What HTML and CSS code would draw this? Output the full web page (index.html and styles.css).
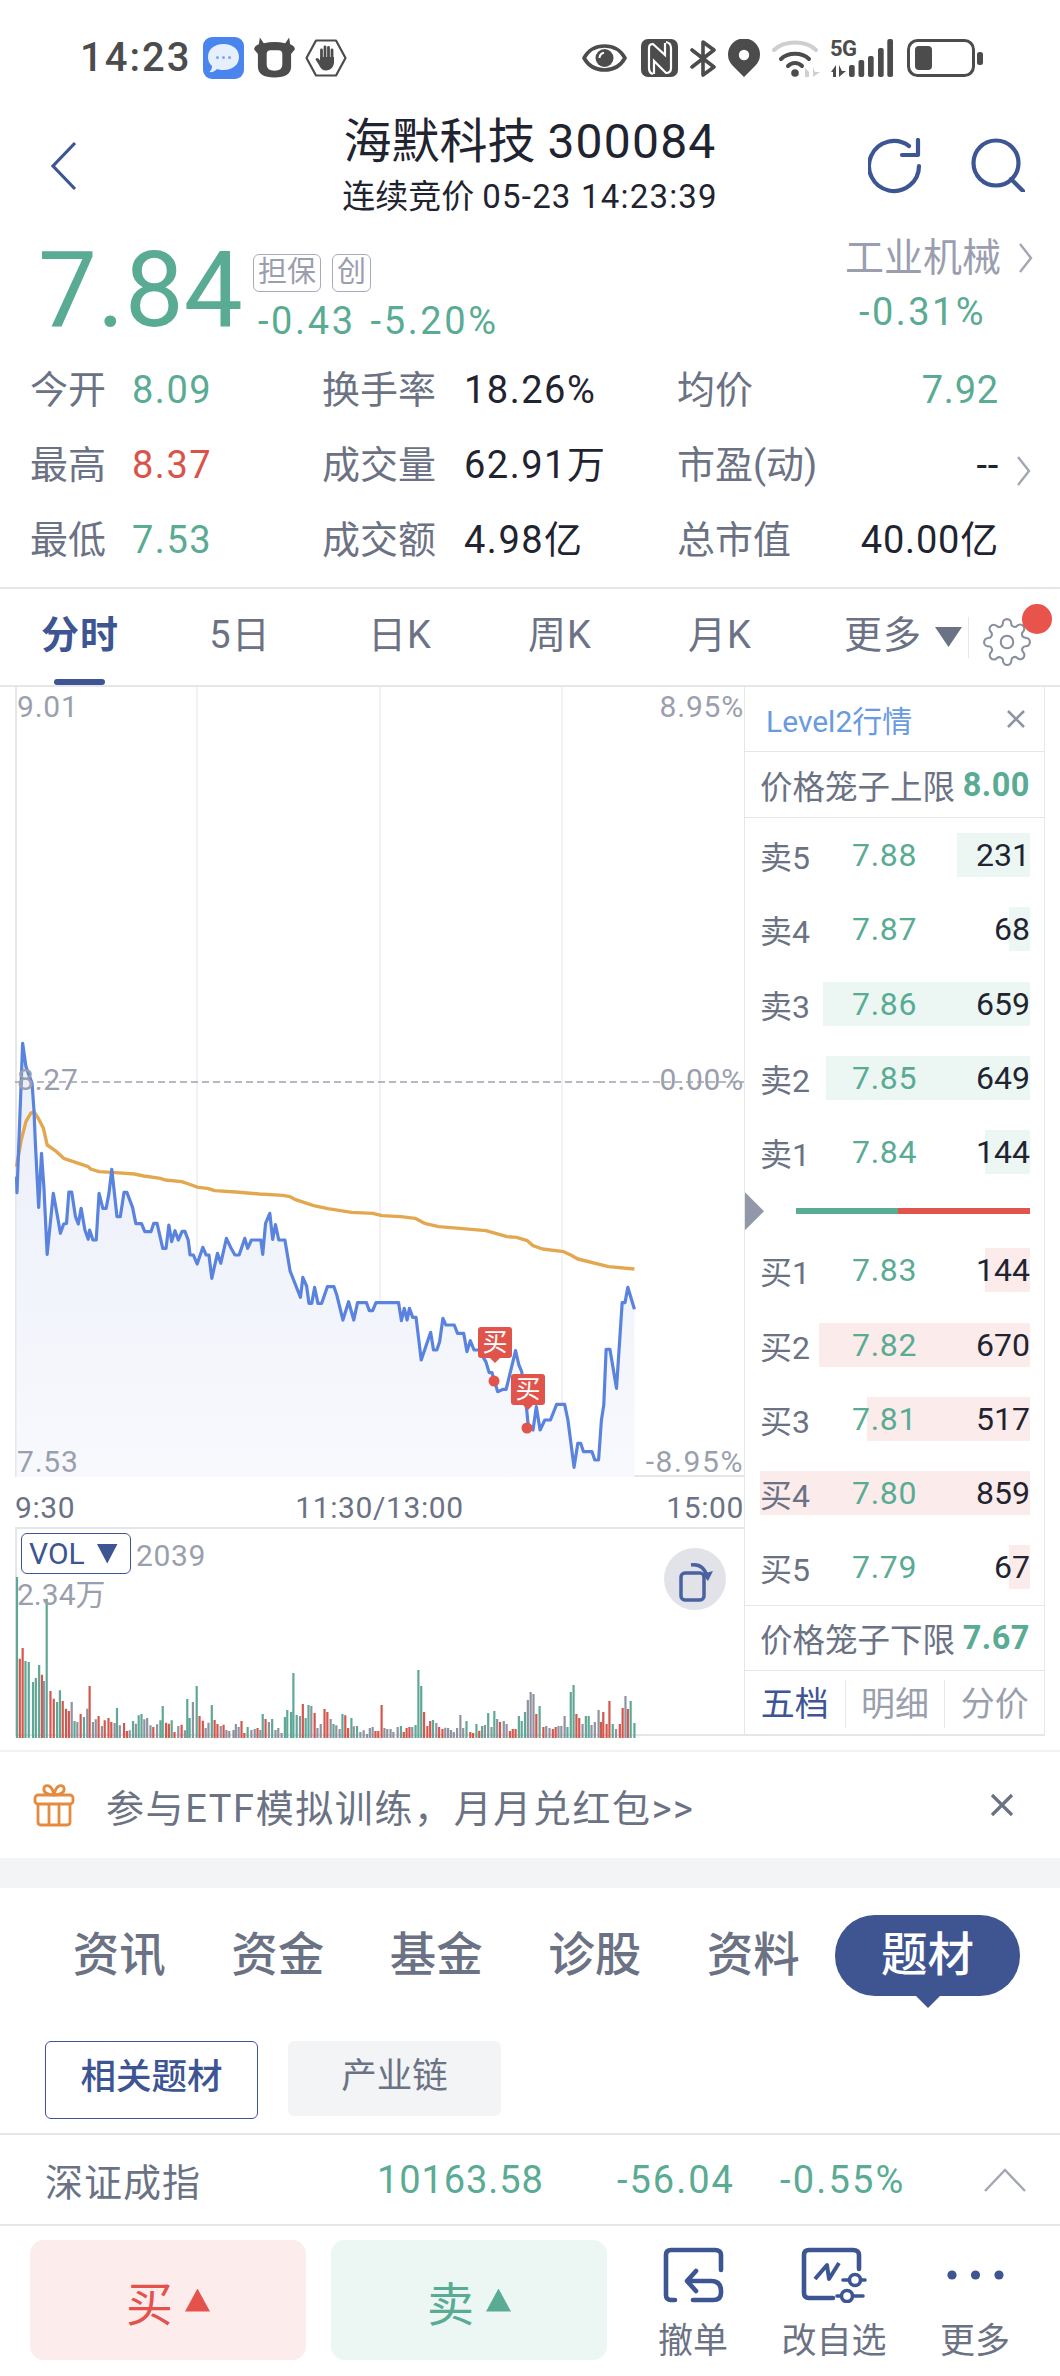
FILE: index.html
```html
<!DOCTYPE html>
<html lang="zh-CN">
<head>
<meta charset="utf-8">
<title>海默科技 300084</title>
<link rel="stylesheet" href="styles.css">
</head>
<body>
<div class="app">

  <div class="statusbar">
    <div class="status-left">
      <span class="clock">14:23</span>
      <svg class="s-msg" viewBox="0 0 41 42"><rect width="41" height="42" rx="9" fill="#4a85ef"/><path d="M20.5 7C30 7 36 12.500 36 20S30 33 20.500 33C18 33 16 32.700 14 32C12 34.500 9 35.500 6.500 35C8 33.500 9 31.500 9 29C6.500 27 5 24 5 20C5 12.500 11 7 20.500 7Z" fill="#e6f0fd"/><circle cx="14.500" cy="20.500" r="1.500" fill="#7ea6ea"/><circle cx="20.500" cy="20.500" r="1.500" fill="#7ea6ea"/><circle cx="26.500" cy="20.500" r="1.500" fill="#7ea6ea"/></svg>
      <svg class="s-cow" viewBox="0 0 42 42"><path fill-rule="evenodd" d="M6 0L10 6Q21 3 32 6L36 0L37 7Q41 8 42 12L38 17V30Q38 41 21 41Q4 41 4 30V17L0 12Q1 8 5 7ZM17 13Q13 13 13 17V28Q13 34 21 34Q29 34 29 28V17Q29 13 25 13Z" fill="#4c4c4c"/></svg>
      <svg class="s-hand" viewBox="0 0 42 38"><path d="M1.500 19L11 1.500H31L40.500 19L31 36.500H11Z" fill="none" stroke="#4c4c4c" stroke-width="2.200" stroke-linejoin="round"/><path d="M16.500 20V11M20 20V8M23.500 20V8.500M27 21V11" stroke="#4c4c4c" stroke-width="2.800" stroke-linecap="round" fill="none"/><path d="M15 18H29V24Q28 31 21.500 31.500Q16 31.500 14 26L10.500 20.500Q11 18 13.500 19.500L15 21.500Z" fill="#4c4c4c"/></svg>
    </div>
    <div class="status-right">
      <svg class="s-eye" viewBox="0 0 45 30"><path d="M2 15C11 -1 34 -1 43 15C34 31 11 31 2 15Z" fill="none" stroke="#4c4c4c" stroke-width="3.600" stroke-linejoin="round"/><circle cx="22.500" cy="15" r="9" fill="#4c4c4c"/><path d="M17.500 15A5.500 5.500 0 0 1 22 9.800" fill="none" stroke="#fff" stroke-width="2"/></svg>
      <svg class="s-nfc" viewBox="0 0 37 38"><rect width="37" height="38" rx="7" fill="#4c4c4c"/><path d="M12 35Q8 34 8 29V9Q8 5 12 5L24 16V4M25 3Q30 4 30 9V29Q30 34 25 34L13 22V35" fill="none" stroke="#fff" stroke-width="2.200"/></svg>
      <svg class="s-bt" viewBox="0 0 26 37"><path d="M2 10L24 27L13 35V2L24 10L2 27" fill="none" stroke="#4c4c4c" stroke-width="3.600" stroke-linejoin="round" stroke-linecap="round"/></svg>
      <svg class="s-pin" viewBox="0 0 32 38"><path d="M16 38L4.500 26.500A16 16 0 1 1 27.500 26.500Z" fill="#4c4c4c"/><circle cx="16" cy="16" r="5.200" fill="#fff"/></svg>
      <svg class="s-wifi" viewBox="0 0 48 39"><path d="M2 11C12 1 34 1 44 11" fill="none" stroke="#cfcfcf" stroke-width="4" stroke-linecap="round"/><path d="M9 20C16 13 30 13 37 20M16 27C20 23 26 23 30 27" fill="none" stroke="#4c4c4c" stroke-width="4" stroke-linecap="round"/><circle cx="23" cy="34" r="3.800" fill="#4c4c4c"/><path d="M33 38V29L37 33V38ZM41 28V38L48 33H43Z" fill="#cfcfcf"/></svg>
      <div class="s-net">
        <span class="s-5g">5G</span>
        <svg class="s-bars" viewBox="0 0 63 39"><path d="M1 33L6 26V38H3V33ZM9 26V38L16 32H12Z" fill="#4c4c4c"/><rect x="19" y="26" width="5.700" height="12" rx="2" fill="#4c4c4c"/><rect x="28.500" y="21" width="5.700" height="17" rx="2" fill="#4c4c4c"/><rect x="38" y="17" width="5.700" height="21" rx="2" fill="#4c4c4c"/><rect x="48" y="9" width="5.700" height="29" rx="2" fill="#4c4c4c"/><rect x="57.300" y="0" width="5.700" height="38" rx="2" fill="#4c4c4c"/></svg>
      </div>
      <svg class="s-batt" viewBox="0 0 76 38"><rect x="1.500" y="1.500" width="65" height="35" rx="9" fill="none" stroke="#4c4c4c" stroke-width="3"/><rect x="8" y="7" width="17" height="24" rx="4" fill="#4c4c4c"/><rect x="70" y="13" width="6" height="13" rx="2.500" fill="#4c4c4c"/></svg>
    </div>
  </div>

  <header class="header">
    <div class="header-left">
      <svg class="ic-back" viewBox="0 0 27 50"><path d="M25 2L3 25L25 48" fill="none" stroke="#3d5593" stroke-width="3.200"/></svg>
    </div>
    <div class="titles">
      <div class="title">海默科技 <span class="num">300084</span></div>
      <div class="subtitle">连续竞价 <span class="num">05-23 14:23:39</span></div>
    </div>
    <div class="header-right">
      <svg class="ic-refresh" viewBox="0 0 54 56"><path d="M41 8A25 25 0 1 0 51 28" fill="none" stroke="#3d5593" stroke-width="4.200" stroke-linecap="round"/><path d="M34 17H50V2" fill="none" stroke="#3d5593" stroke-width="4.200" stroke-linejoin="round" stroke-linecap="round"/></svg>
      <svg class="ic-search" viewBox="0 0 55 54"><circle cx="26" cy="25" r="22.500" fill="none" stroke="#3d5593" stroke-width="4.200"/><path d="M41 41L53 53" stroke="#3d5593" stroke-width="4.200" stroke-linecap="round"/></svg>
    </div>
  </header>

  <section class="quote">
    <div class="price">7.84</div>
    <div class="quote-side">
      <div class="tags"><span class="tag">担保</span><span class="tag">创</span></div>
      <div class="change"><span>-0.43</span><span>-5.20%</span></div>
    </div>
    <div class="sector">
      <div class="sector-name">工业机械<svg class="chev-r sector-chev" viewBox="0 0 15 30"><path d="M2 1L13 15L2 29" fill="none" stroke="#a3a7b3" stroke-width="2.400"/></svg></div>
      <div class="sector-change">-0.31%</div>
    </div>
  </section>

  <section class="stats">
    <span class="k">今开</span><span class="v down">8.09</span>
    <span class="k">换手率</span><span class="v">18.26%</span>
    <span class="k">均价</span><span class="v down end">7.92</span><span></span>

    <span class="k">最高</span><span class="v up">8.37</span>
    <span class="k">成交量</span><span class="v">62.91万</span>
    <span class="k">市盈(动)</span><span class="v end">--</span><span class="more"><svg class="chev-r" viewBox="0 0 15 30"><path d="M2 1L13 15L2 29" fill="none" stroke="#a3a7b3" stroke-width="2.400"/></svg></span>

    <span class="k">最低</span><span class="v down">7.53</span>
    <span class="k">成交额</span><span class="v">4.98亿</span>
    <span class="k">总市值</span><span class="v end">40.00亿</span><span></span>
  </section>

  <nav class="periods">
    <span class="period active">分时</span>
    <span class="period">5日</span>
    <span class="period">日K</span>
    <span class="period">周K</span>
    <span class="period">月K</span>
    <span class="period period-more">更多</span>
    <span class="gear-cell">
      <svg class="gear" viewBox="0 0 24 24"><path d="M12 15a3 3 0 1 0 0-6 3 3 0 0 0 0 6z" fill="none" stroke="#8a8f9e" stroke-width="1"/><path d="M19.400 15a1.650 1.650 0 0 0 .33 1.820l.06.06a2 2 0 0 1 0 2.830 2 2 0 0 1-2.830 0l-.06-.06a1.650 1.650 0 0 0-1.820-.33 1.650 1.650 0 0 0-1 1.510V21a2 2 0 0 1-2 2 2 2 0 0 1-2-2v-.09A1.650 1.650 0 0 0 9 19.400a1.650 1.650 0 0 0-1.820.33l-.06.06a2 2 0 0 1-2.830 0 2 2 0 0 1 0-2.830l.06-.06a1.650 1.650 0 0 0 .33-1.820 1.650 1.650 0 0 0-1.510-1H3a2 2 0 0 1-2-2 2 2 0 0 1 2-2h.09A1.650 1.650 0 0 0 4.600 9a1.650 1.650 0 0 0-.33-1.820l-.06-.06a2 2 0 0 1 0-2.830 2 2 0 0 1 2.830 0l.06.06a1.650 1.650 0 0 0 1.820.33H9a1.650 1.650 0 0 0 1-1.510V3a2 2 0 0 1 2-2 2 2 0 0 1 2 2v.09a1.650 1.650 0 0 0 1 1.510 1.650 1.650 0 0 0 1.820-.33l.06-.06a2 2 0 0 1 2.830 0 2 2 0 0 1 0 2.830l-.06.06a1.650 1.650 0 0 0-.33 1.820V9a1.650 1.650 0 0 0 1.510 1H21a2 2 0 0 1 2 2 2 2 0 0 1-2 2h-.09a1.650 1.650 0 0 0-1.510 1z" fill="none" stroke="#8a8f9e" stroke-width="1"/></svg>
      <span class="gear-dot"></span>
    </span>
  </nav>

  <section class="market">
    <div class="chart-col">
      <div class="price-chart">
        <svg class="plot" viewBox="15 687 730 790">
          <defs>
            <linearGradient id="area" x1="0" y1="0" x2="0" y2="1">
              <stop offset="0" stop-color="#eaeef9"/>
              <stop offset="1" stop-color="#f8f9fd"/>
            </linearGradient>
          </defs>
          <path d="M197 687V1477M380 687V1477M562 687V1477" stroke="#edeef1" stroke-width="1.500"/>
          <path d="M15 1082H744" stroke="#9ea3b0" stroke-width="1.500" stroke-dasharray="7 4"/>
          <g transform="translate(0 1000) scale(.4717 .33333)">
            <polygon fill="url(#area)" points="35,1432 35,530 36,578 48,130 55,200 68,250 72,330 75,430 82,622 88,460 93,560 100,763 113,580 122,650 128,700 135,672 141,670 146,576 152,576 160,650 166,672 172,625 180,690 187,718 190,690 197,720 204,720 210,580 218,625 225,625 231,580 237,508 248,650 255,650 263,577 269,577 281,622 288,671 300,671 307,695 320,695 326,670 333,670 345,745 352,745 358,675 364,725 371,692 378,720 386,694 392,694 399,720 403,765 410,765 418,792 430,742 437,765 443,765 449,835 461,760 468,790 480,715 490,745 498,765 507,765 519,715 525,745 533,720 553,720 557,763 563,670 572,640 578,718 584,674 591,720 604,720 615,813 637,892 642,832 650,858 655,910 661,910 667,862 674,910 682,910 694,860 708,860 714,885 727,960 739,905 750,960 758,908 777,908 783,932 790,932 797,908 845,908 851,962 857,925 863,960 868,925 875,952 882,952 893,1080 913,997 919,1050 926,1050 932,1025 939,955 945,975 963,975 970,1000 983,1000 990,1055 997,1022 1005,1050 1015,1050 1030,1085 1037,1118 1043,1118 1055,1175 1067,1168 1073,1168 1093,1052 1100,1095 1106,1115 1117,1235 1120,1280 1130,1290 1137,1220 1145,1290 1155,1260 1167,1260 1180,1213 1197,1213 1204,1260 1217,1402 1225,1330 1231,1330 1237,1355 1255,1355 1261,1380 1269,1380 1275,1260 1280,1215 1285,1048 1293,1048 1307,1165 1319,908 1325,908 1331,862 1345,928 1345,1432"/>
            <polyline class="line-avg" points="35,500 45,420 55,365 65,340 72,335 80,352 92,385 100,435 120,455 135,475 187,500 192,507 210,515 245,518 285,522 305,528 340,535 350,540 385,545 400,552 420,562 440,565 455,572 500,576 550,582 600,586 615,590 625,598 665,617 695,626 745,637 790,640 810,647 850,650 880,655 900,670 930,680 975,685 1030,692 1075,710 1095,712 1118,722 1130,737 1150,747 1195,755 1210,765 1225,777 1290,800 1345,807"/>
            <polyline class="line-price" points="35,530 36,578 48,130 55,200 68,250 72,330 75,430 82,622 88,460 93,560 100,763 113,580 122,650 128,700 135,672 141,670 146,576 152,576 160,650 166,672 172,625 180,690 187,718 190,690 197,720 204,720 210,580 218,625 225,625 231,580 237,508 248,650 255,650 263,577 269,577 281,622 288,671 300,671 307,695 320,695 326,670 333,670 345,745 352,745 358,675 364,725 371,692 378,720 386,694 392,694 399,720 403,765 410,765 418,792 430,742 437,765 443,765 449,835 461,760 468,790 480,715 490,745 498,765 507,765 519,715 525,745 533,720 553,720 557,763 563,670 572,640 578,718 584,674 591,720 604,720 615,813 637,892 642,832 650,858 655,910 661,910 667,862 674,910 682,910 694,860 708,860 714,885 727,960 739,905 750,960 758,908 777,908 783,932 790,932 797,908 845,908 851,962 857,925 863,960 868,925 875,952 882,952 893,1080 913,997 919,1050 926,1050 932,1025 939,955 945,975 963,975 970,1000 983,1000 990,1055 997,1022 1005,1050 1015,1050 1030,1085 1037,1118 1043,1118 1055,1175 1067,1168 1073,1168 1093,1052 1100,1095 1106,1115 1117,1235 1120,1280 1130,1290 1137,1220 1145,1290 1155,1260 1167,1260 1180,1213 1197,1213 1204,1260 1217,1402 1225,1330 1231,1330 1237,1355 1255,1355 1261,1380 1269,1380 1275,1260 1280,1215 1285,1048 1293,1048 1307,1165 1319,908 1325,908 1331,862 1345,928"/>
          </g>
          <circle cx="494" cy="1381" r="5.500" fill="#e0544c"/>
          <circle cx="527" cy="1428" r="5.500" fill="#e0544c"/>
        </svg>
        <span class="axis-label lt">9.01</span>
        <span class="axis-label rt">8.95%</span>
        <span class="axis-label lm">8.27</span>
        <span class="axis-label rm">0.00%</span>
        <span class="axis-label lb">7.53</span>
        <span class="axis-label rb">-8.95%</span>
        <span class="trade-tag tag-a">买</span>
        <span class="trade-tag tag-b">买</span>
      </div>
      <div class="time-axis"><span>9:30</span><span>11:30/13:00</span><span class="time-end">15:00</span></div>
      <div class="vol-panel">
        <svg class="vol-bars" viewBox="0 1500 730 236" preserveAspectRatio="none">
          <g transform="translate(-15 1500) scale(.4717 .33333)">
            <path class="bar-g" d="M36 708V225M54 708V477M61 708V480M70 708V540M76 708V528M83 708V489M99 708V290M121 708V600M127 708V565M158 708V657M178 708V645M248 708V618M282 708V657M294 708V640M300 708V636M340 708V655M345 708V612M364 708V655M397 708V591M402 708V648M417 708V552M449 708V609M525 708V675M557 708V636M577 708V651M604 708V645M609 708V624M617 708V630M622 708V513M629 708V639M648 708V648M654 708V609M707 708V666M726 708V636M745 708V648M757 708V672M850 708V672M881 708V669M887 708V504M893 708V552M918 708V654M989 708V657M1010 708V666M1022 708V672M1035 708V633M1048 708V627M1100 708V642M1106 708V657M1113 708V630M1144 708V612M1203 708V675M1210 708V570M1216 708V549M1242 708V642M1248 708V642M1299 708V666M1337 708V597M1345 708V663"/>
            <path class="bar-r" d="M42 708V470M48 708V438M89 708V518M107 708V567M114 708V590M133 708V597M140 708V620M146 708V627M171 708V636M190 708V552M209 708V642M222 708V655M230 708V648M236 708V660M263 708V663M269 708V687M325 708V675M352 708V662M358 708V665M370 708V690M385 708V668M423 708V642M430 708V656M455 708V654M461 708V666M474 708V668M512 708V657M518 708V693M546 708V678M563 708V651M642 708V606M667 708V633M688 708V621M694 708V630M732 708V640M738 708V678M796 708V687M802 708V687M809 708V609M856 708V690M862 708V678M868 708V675M899 708V630M906 708V672M912 708V657M931 708V675M938 708V681M997 708V690M1003 708V693M1016 708V686M1060 708V660M1081 708V687M1087 708V681M1093 708V681M1137 708V636M1152 708V675M1172 708V681M1178 708V675M1222 708V636M1228 708V648M1274 708V660M1279 708V630M1286 708V666M1292 708V597M1314 708V666M1320 708V618M1331 708V621"/>
            <path class="bar-s" d="M93 708V537M152 708V600M164 708V660M185 708V620M197 708V660M203 708V652M216 708V672M243 708V663M254 708V670M275 708V685M288 708V665M306 708V652M312 708V648M319 708V670M333 708V667M378 708V672M392 708V685M409 708V600M436 708V678M442 708V662M468 708V672M480 708V684M486 708V687M495 708V684M500 708V666M506 708V675M533 708V684M540 708V681M552 708V684M570 708V660M584 708V684M590 708V678M597 708V693M636 708V642M660 708V612M673 708V678M680 708V666M701 708V651M713 708V670M720 708V681M750 708V673M764 708V690M771 708V685M778 708V696M784 708V678M790 708V675M815 708V678M821 708V681M828 708V681M834 708V690M843 708V675M874 708V675M925 708V663M944 708V677M950 708V678M956 708V684M962 708V690M969 708V678M976 708V639M982 708V678M1028 708V669M1042 708V675M1054 708V651M1068 708V657M1074 708V666M1119 708V594M1125 708V570M1131 708V576M1158 708V672M1165 708V678M1184 708V672M1190 708V672M1197 708V642M1235 708V666M1254 708V669M1261 708V660M1269 708V624M1306 708V681M1326 708V582"/>
          </g>
        </svg>
        <div class="vol-head">
          <span class="vol-select">VOL<i class="vol-caret"></i></span>
          <span class="vol-value">2039</span>
        </div>
        <span class="vol-max">2.34万</span>
        <span class="rotate-btn">
          <svg viewBox="0 0 40 42"><rect x="6" y="13" width="23" height="27" rx="4" fill="none" stroke="#4a62a0" stroke-width="3.500"/><path d="M16 5Q28 3 32 16" fill="none" stroke="#4a62a0" stroke-width="3.500"/><path d="M27 14L33 21L38 11Z" fill="#4a62a0"/></svg>
        </span>
      </div>
    </div>

    <aside class="depth">
      <div class="depth-head"><span>Level2行情</span><svg class="x-small" viewBox="0 0 18 18"><path d="M1 1L17 17M17 1L1 17" stroke="#8e93a1" stroke-width="2.600"/></svg></div>
      <div class="cage"><span>价格笼子上限</span><b>8.00</b></div>
      <div class="book">
        <div class="level"><i class="fill ask" style="width:73px"></i><span class="lv">卖5</span><span class="lp">7.88</span><span class="lq">231</span></div>
        <div class="level"><i class="fill ask" style="width:21px"></i><span class="lv">卖4</span><span class="lp">7.87</span><span class="lq">68</span></div>
        <div class="level"><i class="fill ask" style="width:207px"></i><span class="lv">卖3</span><span class="lp">7.86</span><span class="lq">659</span></div>
        <div class="level"><i class="fill ask" style="width:204px"></i><span class="lv">卖2</span><span class="lp">7.85</span><span class="lq">649</span></div>
        <div class="level"><i class="fill ask" style="width:45px"></i><span class="lv">卖1</span><span class="lp">7.84</span><span class="lq">144</span></div>
        <div class="balance"><i class="balance-mark"></i><span class="balance-bar"><i class="side-ask"></i><i class="side-bid"></i></span></div>
        <div class="level"><i class="fill bid" style="width:45px"></i><span class="lv">买1</span><span class="lp">7.83</span><span class="lq">144</span></div>
        <div class="level"><i class="fill bid" style="width:211px"></i><span class="lv">买2</span><span class="lp">7.82</span><span class="lq">670</span></div>
        <div class="level"><i class="fill bid" style="width:163px"></i><span class="lv">买3</span><span class="lp">7.81</span><span class="lq">517</span></div>
        <div class="level"><i class="fill bid" style="width:270px"></i><span class="lv">买4</span><span class="lp">7.80</span><span class="lq">859</span></div>
        <div class="level"><i class="fill bid" style="width:21px"></i><span class="lv">买5</span><span class="lp">7.79</span><span class="lq">67</span></div>
      </div>
      <div class="cage cage-low"><span>价格笼子下限</span><b>7.67</b></div>
      <div class="depth-tabs"><span class="active">五档</span><span>明细</span><span>分价</span></div>
    </aside>
  </section>

  <div class="promo">
    <svg class="gift" viewBox="0 0 42 44"><g fill="none" stroke="#e58b3f" stroke-width="2.800" stroke-linejoin="round"><path d="M21 12C14 12 10 9 11 5C12 1 19 1 21 12C23 1 30 1 31 5C32 9 28 12 21 12Z"/><rect x="2" y="12" width="38" height="9" rx="3"/><path d="M5 21V39Q5 42 8 42H34Q37 42 37 39V21"/><path d="M16 21V42M26 21V42"/></g></svg>
    <span class="promo-text">参与ETF模拟训练，月月兑红包&gt;&gt;</span>
    <svg class="promo-x" viewBox="0 0 24 24"><path d="M2 2L22 22M22 2L2 22" stroke="#6b7284" stroke-width="3.200"/></svg>
  </div>
  <div class="band"></div>

  <nav class="info-tabs">
    <span class="info-tab">资讯</span>
    <span class="info-tab">资金</span>
    <span class="info-tab">基金</span>
    <span class="info-tab">诊股</span>
    <span class="info-tab">资料</span>
    <span class="info-tab current">题材</span>
  </nav>

  <div class="sub-tabs">
    <span class="sub-tab on">相关题材</span>
    <span class="sub-tab">产业链</span>
  </div>

  <div class="index-row">
    <span class="index-name">深证成指</span>
    <span class="index-last">10163.58</span>
    <span class="index-chg">-56.04</span>
    <span class="index-pct">-0.55%</span>
    <svg class="chev-up" viewBox="0 0 44 24"><path d="M2 23L22 2L42 23" fill="none" stroke="#a3a7b3" stroke-width="2.400"/></svg>
  </div>

  <footer class="actions">
    <button class="trade buy">买<i class="arrow"></i></button>
    <button class="trade sell">卖<i class="arrow"></i></button>
    <div class="act act-undo">
      <svg class="act-ic" viewBox="0 0 61 56"><path d="M58 23V8Q58 3 52 3H8Q3 3 3 8V48Q3 53 8 53H12M33 24L24 34L33 44M24 34H48Q58 34 58 44V46Q58 53 50 53H30" fill="none" stroke="#3d5593" stroke-width="4.600" stroke-linejoin="round" stroke-linecap="round"/></svg>
      <span>撤单</span>
    </div>
    <div class="act act-fav">
      <svg class="act-ic" viewBox="0 0 66 56"><path d="M58 22V8Q58 3 52 3H8Q3 3 3 8V46Q3 51 8 51H32" fill="none" stroke="#3d5593" stroke-width="4.600" stroke-linecap="round"/><path d="M14 32L26 18L28 32L38 16" fill="none" stroke="#3d5593" stroke-width="4" stroke-linejoin="round"/><path d="M42 33H64M36 49H62" stroke="#3d5593" stroke-width="3.600" stroke-linecap="round"/><circle cx="54" cy="33" r="5.500" fill="#fff" stroke="#3d5593" stroke-width="3.600"/><circle cx="46" cy="49" r="5.500" fill="#fff" stroke="#3d5593" stroke-width="3.600"/></svg>
      <span>改自选</span>
    </div>
    <div class="act act-more">
      <svg class="act-ic dots" viewBox="0 0 57 10"><circle cx="5" cy="5" r="4.600" fill="#3d5593"/><circle cx="28.500" cy="5" r="4.600" fill="#3d5593"/><circle cx="52" cy="5" r="4.600" fill="#3d5593"/></svg>
      <span>更多</span>
    </div>
  </footer>

</div>
</body>
</html>
```

FILE: styles.css
```css
* { box-sizing: border-box; margin: 0; padding: 0; }

html, body { background: #fff; }

body {
  font-family: Roboto, "Noto Sans CJK SC", sans-serif;
  color: #1f2430;
}

.app { width: 1060px; height: 2376px; overflow: hidden; }

svg { display: block; flex: none; }
i { font-style: normal; }

/* system status bar */
.statusbar {
  height: 110px;
  padding: 37px 77px 0 80px;
  display: flex;
  justify-content: space-between;
  align-items: flex-start;
}
.status-left { display: flex; align-items: center; gap: 10px; }
.clock {
  width: 113px;
  font-size: 40px;
  line-height: 42px;
  font-weight: 500;
  letter-spacing: 2px;
  color: #4c4c4c;
}
.s-msg, .s-cow { width: 41px; height: 42px; }
.s-hand { width: 42px; height: 38px; }
.status-right { display: flex; align-items: center; gap: 12px; height: 42px; }
.s-eye { width: 45px; height: 30px; margin-right: 2px; }
.s-nfc { width: 37px; height: 38px; }
.s-bt { width: 26px; height: 37px; }
.s-pin { width: 32px; height: 38px; }
.s-wifi { width: 48px; height: 39px; }
.s-net { position: relative; width: 63px; height: 39px; margin-left: -2px; }
.s-bars { width: 63px; height: 39px; }
.s-5g {
  position: absolute;
  left: 0;
  top: 0;
  font-size: 22px;
  line-height: 20px;
  font-weight: 700;
  letter-spacing: -.5px;
  color: #4c4c4c;
}
.s-batt { width: 76px; height: 38px; margin-left: 2px; }

/* stock header */
.header {
  height: 112px;
  display: grid;
  grid-template-columns: 1fr auto 1fr;
  align-items: center;
}
.header-left { padding-left: 50px; }
.ic-back { width: 27px; height: 50px; }
.titles { text-align: center; align-self: start; padding-top: 2px; }
.title { font-size: 48px; line-height: 60px; color: #1f2430; }
.title .num { letter-spacing: 1.200px; }
.subtitle { font-size: 33px; line-height: 50px; color: #1f2430; }
.subtitle .num { letter-spacing: 1.200px; }
.header-right {
  display: flex;
  justify-content: flex-end;
  gap: 48px;
  padding-right: 35px;
}
.ic-refresh { width: 54px; height: 56px; }
.ic-search { width: 55px; height: 54px; }

/* last price block */
.quote {
  height: 130px;
  padding-left: 38px;
  display: flex;
  align-items: flex-start;
  color: #5aab93;
}
.price {
  font-size: 105px;
  line-height: 100px;
  margin-top: 19px;
  width: 215px;
  letter-spacing: 0;
}
.quote-side { padding-top: 32px; }
.tags { display: flex; gap: 11px; }
.tag {
  height: 38px;
  padding: 0 4px;
  border: 1.5px solid #a9acb8;
  border-radius: 6px;
  font-size: 29px;
  line-height: 34px;
  color: #9a9eae;
}
.change {
  display: flex;
  gap: 15px;
  margin-top: 7px;
  margin-left: 5px;
  font-size: 38px;
  line-height: 44px;
  letter-spacing: 2.600px;
}
.sector {
  margin-left: auto;
  width: 215px;
  padding-top: 14px;
}
.sector-name {
  display: flex;
  align-items: center;
  gap: 17px;
  font-size: 39px;
  line-height: 44px;
  color: #9a9eae;
}
.sector-change {
  width: 155px;
  text-align: center;
  font-size: 38px;
  line-height: 44px;
  margin-top: 10px;
  letter-spacing: 2.400px;
}
.chev-r { width: 15px; height: 30px; }

/* day statistics */
.stats {
  height: 237px;
  padding-left: 30px;
  border-bottom: 2px solid #e5e6e8;
  display: grid;
  grid-template-columns: 102px 190px 142px 213px 150px 172px 61px;
  grid-auto-rows: 75px;
  align-items: center;
  font-size: 38px;
  line-height: 44px;
}
.k { color: #6b7284; }
.v { color: #1f2430; letter-spacing: 1.500px; }
.v.end { text-align: right; letter-spacing: .8px; }
.down { color: #5aab93; }
.up { color: #d9534a; }
.more { padding: 12px 0 0 17px; }

/* chart period tabs */
.periods {
  height: 98px;
  border-bottom: 2px solid #e5e6e8;
  display: grid;
  grid-template-columns: repeat(6, 160px) 100px;
  align-items: center;
  font-size: 38px;
  letter-spacing: 1px;
  color: #6b7284;
}
.period {
  position: relative;
  height: 96px;
  line-height: 92px;
  text-align: center;
}
.period.active { color: #3d5593; font-weight: 700; }
.period.active::after {
  content: "";
  position: absolute;
  left: 54px;
  bottom: 0;
  width: 51px;
  height: 6px;
  border-radius: 3px;
  background: #3d5593;
}
.period-more { padding-left: 6px; }
.period-more::after {
  content: "";
  position: absolute;
  left: 135px;
  top: 38px;
  width: 27px;
  height: 20px;
  background: #6b7284;
  clip-path: polygon(0 0, 100% 0, 50% 100%);
}
.gear-cell {
  position: relative;
  height: 96px;
}
.gear-cell::before {
  content: "";
  position: absolute;
  left: 8px;
  top: 28px;
  width: 1px;
  height: 41px;
  background: #e5e6e8;
}
.gear {
  position: absolute;
  left: 22px;
  top: 28px;
  width: 50px;
  height: 50px;
}
.gear-dot {
  position: absolute;
  left: 62px;
  top: 15px;
  width: 30px;
  height: 30px;
  border-radius: 50%;
  background: #e8534b;
}

/* intraday chart and order book */
.market {
  height: 1065px;
  padding-bottom: 16px;
  border-bottom: 2px solid #f0f1f3;
  display: flex;
}
.chart-col { width: 744px; padding-left: 15px; flex: none; }

.price-chart {
  position: relative;
  height: 790px;
  border-left: 2px solid #e5e6e8;
  border-bottom: 2px solid #e5e6e8;
}
.plot { position: absolute; left: -2px; top: 0; width: 730px; height: 790px; }
.line-price, .line-avg { fill: none; vector-effect: non-scaling-stroke; stroke-linejoin: round; }
.line-price { stroke: #5a83e0; stroke-width: 3.200px; }
.line-avg { stroke: #e3a84f; stroke-width: 3.400px; }

.axis-label {
  position: absolute;
  font-size: 30px;
  line-height: 34px;
  color: #9a9fad;
  letter-spacing: .8px;
}
.lt { left: 0; top: 3px; }
.rt { right: 0; top: 3px; }
.lm { left: 0; top: 376px; }
.rm { right: 0; top: 376px; }
.lb { left: 0; top: 758px; }
.rb { right: 0; top: 758px; letter-spacing: 1.600px; }

.trade-tag {
  position: absolute;
  width: 34px;
  height: 31px;
  border-radius: 3px;
  background: #e0544c;
  color: #fff;
  font-size: 25px;
  line-height: 31px;
  text-align: center;
}
.trade-tag::after {
  content: "";
  position: absolute;
  left: 12px;
  top: 31px;
  width: 10px;
  height: 5px;
  background: #e0544c;
  clip-path: polygon(0 0, 100% 0, 50% 100%);
}
.tag-a { left: 461px; top: 640px; }
.tag-b { left: 494px; top: 687px; }

.time-axis {
  height: 50px;
  padding-top: 13px;
  display: grid;
  grid-template-columns: 1fr auto 1fr;
  font-size: 30px;
  line-height: 36px;
  letter-spacing: .6px;
  color: #6b7284;
}
.time-end { text-align: right; }

.vol-panel {
  position: relative;
  height: 209px;
  border: 2px solid #e5e6e8;
  border-right: 0;
}
.vol-bars {
  position: absolute;
  left: -2px;
  top: -27px;
  width: 730px;
  height: 236px;
}
.bar-g, .bar-r, .bar-s { fill: none; vector-effect: non-scaling-stroke; stroke-width: 2.200px; }
.bar-g { stroke: #5fa896; }
.bar-r { stroke: #d4574e; }
.bar-s { stroke: #8f93a0; }

.vol-head {
  position: relative;
  display: flex;
  align-items: center;
  gap: 5px;
  padding: 4px 0 0 4px;
}
.vol-select {
  display: flex;
  align-items: center;
  gap: 12px;
  width: 110px;
  height: 41px;
  padding-left: 7px;
  border: 1.5px solid #3d5593;
  border-radius: 6px;
  font-size: 30px;
  color: #3d5593;
}
.vol-caret {
  width: 21px;
  height: 20px;
  background: #3d5593;
  clip-path: polygon(0 0, 100% 0, 50% 100%);
}
.vol-value { font-size: 30px; color: #9a9fad; margin-top: 4px; letter-spacing: .6px; }
.vol-max {
  position: absolute;
  left: 0;
  top: 48px;
  font-size: 30px;
  line-height: 36px;
  color: #9a9fad;
}
.rotate-btn {
  position: absolute;
  right: 18px;
  top: 19px;
  width: 62px;
  height: 62px;
  padding: 12px 11px;
  border-radius: 50%;
  background: #e2e3e9;
}

.depth {
  width: 301px;
  flex: none;
  height: 1049px;
  border-left: 1.500px solid #e5e6e8;
  border-right: 1.500px solid #e5e6e8;
  border-bottom: 2px solid #e5e6e8;
}
.depth-head {
  height: 65px;
  padding: 0 19px 0 21px;
  display: flex;
  justify-content: space-between;
  align-items: center;
  border-bottom: 1.500px solid #e5e6e8;
  font-size: 30px;
  color: #6a9be0;
}
.x-small { width: 18px; height: 18px; }
.cage {
  height: 66px;
  padding: 0 14px 0 15px;
  display: flex;
  justify-content: space-between;
  align-items: center;
  border-bottom: 1.500px solid #e5e6e8;
  font-size: 32.500px;
  color: #6b7284;
}
.cage b { color: #5aab93; font-weight: 700; letter-spacing: .5px; }
.cage-low { border-top: 1.500px solid #e5e6e8; }

.level {
  position: relative;
  height: 74.250px;
  padding: 0 14px 0 15px;
  display: flex;
  align-items: center;
  font-size: 32px;
}
.fill {
  position: absolute;
  right: 14px;
  top: 15px;
  height: 44px;
}
.fill.ask { background: #ecf6f3; }
.fill.bid { background: #fbeceb; }
.lv, .lp, .lq { position: relative; }
.lv { width: 92px; color: #6b7284; }
.lp { color: #5aab93; letter-spacing: .7px; }
.lq { margin-left: auto; color: #1f2430; }

.balance {
  position: relative;
  height: 44px;
  padding: 19px 14px 0 51px;
}
.balance-mark {
  position: absolute;
  left: 0;
  top: 3px;
  width: 19px;
  height: 38px;
  background: #9298a9;
  clip-path: polygon(0 0, 100% 50%, 0 100%);
}
.balance-bar { display: flex; height: 6px; }
.side-ask { width: 102px; background: #5aab93; }
.side-bid { flex: 1; background: #e0544c; }

.depth-tabs {
  height: 66px;
  display: grid;
  grid-template-columns: repeat(3, 1fr);
  align-items: center;
  font-size: 34px;
  color: #9a9fad;
  text-align: center;
}
.depth-tabs span { line-height: 48px; }
.depth-tabs span + span { border-left: 1.500px solid #e5e6e8; }
.depth-tabs .active { color: #3d5593; }

/* promotion strip */
.promo {
  height: 106px;
  padding: 0 46px 0 33px;
  display: flex;
  align-items: center;
}
.gift { width: 42px; height: 44px; }
.promo-text {
  margin-left: 31px;
  font-size: 38px;
  letter-spacing: 1.600px;
  color: #6b7284;
}
.promo-x { width: 24px; height: 24px; margin-left: auto; }
.band { height: 30px; background: #f3f4f6; }

/* content section tabs */
.info-tabs {
  height: 147px;
  padding: 27px 0 0 40px;
  display: flex;
  align-items: flex-start;
  font-size: 46.500px;
  font-weight: 500;
  color: #6b7284;
}
.info-tab { width: 158.500px; height: 81px; line-height: 80px; text-align: center; flex: none; }
.info-tab.current {
  position: relative;
  width: 185px;
  margin-left: 2.500px;
  border-radius: 40px;
  background: #3f5592;
  color: #fff;
}
.info-tab.current::after {
  content: "";
  position: absolute;
  left: 81px;
  top: 81px;
  width: 24px;
  height: 12px;
  background: #3f5592;
  clip-path: polygon(0 0, 100% 0, 50% 100%);
}

.sub-tabs {
  height: 100px;
  padding: 6px 0 0 45px;
  display: flex;
  align-items: flex-start;
  gap: 30px;
  border-bottom: 2px solid #e5e6e8;
  font-size: 35.500px;
}
.sub-tab {
  width: 213px;
  height: 75px;
  line-height: 70px;
  border-radius: 6px;
  background: #f3f4f6;
  color: #6b7284;
  text-align: center;
}
.sub-tab.on {
  height: 78px;
  background: #fff;
  border: 1.500px solid #3d5593;
  color: #3d5593;
  font-weight: 500;
}

/* index ticker */
.index-row {
  height: 91px;
  display: grid;
  grid-template-columns: 332px 240px 163px 206px 1fr;
  padding-left: 45px;
  align-items: center;
  border-bottom: 2px solid #e5e6e8;
  font-size: 38px;
  color: #5aab93;
}
.index-name { color: #6b7284; letter-spacing: 1px; }
.index-last { letter-spacing: .9px; }
.index-chg { letter-spacing: 2px; }
.index-pct { letter-spacing: 2.200px; }
.chev-up { width: 44px; height: 24px; margin-left: -3px; }

/* order actions */
.actions {
  height: 150px;
  padding: 14px 0 0 30px;
  display: flex;
  align-items: flex-start;
}
.trade {
  width: 276px;
  height: 120px;
  border: 0;
  border-radius: 14px;
  font-family: inherit;
  font-size: 47px;
  display: flex;
  justify-content: center;
  align-items: center;
  gap: 12px;
}
.trade .arrow {
  width: 25px;
  height: 23px;
  clip-path: polygon(50% 0, 100% 100%, 0 100%);
}
.buy { background: #fcecec; color: #e4534b; }
.buy .arrow { background: #e4534b; }
.sell { margin-left: 25px; background: #ecf6f3; color: #5aab93; }
.sell .arrow { background: #5aab93; }

.act {
  display: flex;
  flex-direction: column;
  align-items: center;
  font-size: 35px;
  line-height: 42px;
  color: #6b7284;
}
.act span { margin-top: 18px; }
.act-ic { height: 56px; margin-top: 7px; }
.act-undo { margin-left: 51px; width: 70px; }
.act-undo .act-ic { width: 61px; }
.act-fav { margin-left: 53px; width: 106px; }
.act-fav .act-ic { width: 66px; }
.act-more { margin-left: 52px; width: 72px; }
.act-more .act-ic.dots { width: 57px; height: 10px; margin-top: 30px; margin-bottom: 23px; }
```
